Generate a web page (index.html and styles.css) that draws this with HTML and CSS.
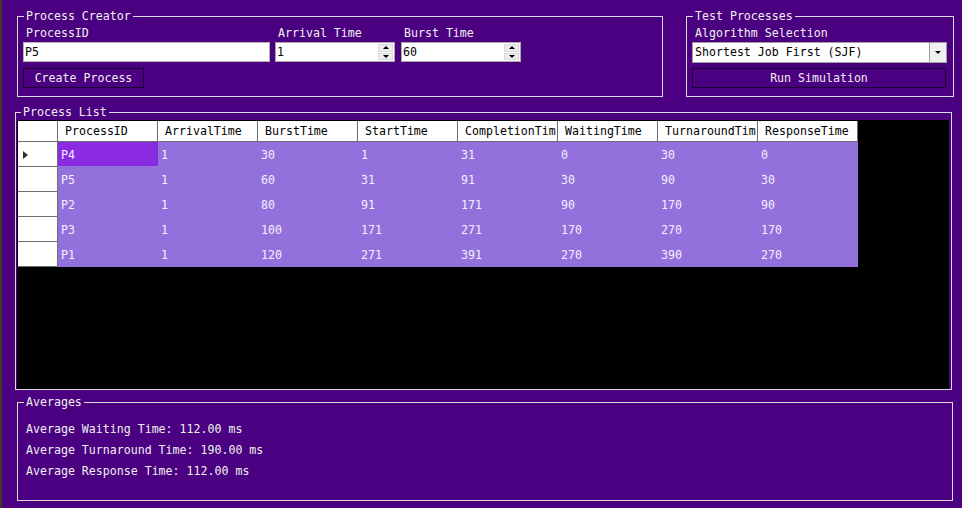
FILE: index.html
```html
<!DOCTYPE html>
<html lang="en">
<head>
    <meta charset="UTF-8">
    <meta name="viewport" content="width=device-width, initial-scale=1.0">
    <title>CPU Scheduler</title>
    <link rel="stylesheet" href="styles.css">
</head>
<body>

<div class="top-row">
    <fieldset class="group creator">
        <legend>Process Creator</legend>
        <div class="creator-fields">
            <div class="field field-id">
                <label for="processId">ProcessID</label>
                <input type="text" id="processId" class="textbox" value="P5">
            </div>
            <div class="field field-arrival">
                <label for="arrivalTime">Arrival Time</label>
                <div class="spin-box">
                    <input type="text" id="arrivalTime" value="1">
                    <div class="spinner">
                        <span class="spin-btn"><i class="tri-up"></i></span>
                        <span class="spin-btn"><i class="tri-down"></i></span>
                    </div>
                </div>
            </div>
            <div class="field field-burst">
                <label for="burstTime">Burst Time</label>
                <div class="spin-box">
                    <input type="text" id="burstTime" value="60">
                    <div class="spinner">
                        <span class="spin-btn"><i class="tri-up"></i></span>
                        <span class="spin-btn"><i class="tri-down"></i></span>
                    </div>
                </div>
            </div>
        </div>
        <button class="win-btn create-btn">Create Process</button>
    </fieldset>

    <fieldset class="group tester">
        <legend>Test Processes</legend>
        <div class="field">
            <label>Algorithm Selection</label>
            <div class="combo">
                <span class="combo-text">Shortest Job First (SJF)</span>
                <span class="combo-btn"><i class="tri-down"></i></span>
            </div>
        </div>
        <button class="win-btn run-btn">Run Simulation</button>
    </fieldset>
</div>

<fieldset class="group process-list">
    <legend>Process List</legend>
    <div class="grid-view">
        <table class="grid-table">
            <colgroup>
                <col class="col-head">
                <col><col><col><col><col><col><col><col>
            </colgroup>
            <thead>
                <tr>
                    <th class="corner"></th>
                    <th>ProcessID</th>
                    <th>ArrivalTime</th>
                    <th>BurstTime</th>
                    <th>StartTime</th>
                    <th>CompletionTim</th>
                    <th>WaitingTime</th>
                    <th>TurnaroundTim</th>
                    <th>ResponseTime</th>
                </tr>
            </thead>
            <tbody>
                <tr>
                    <td class="row-head"><span class="row-arrow"></span></td>
                    <td class="selected">P4</td><td>1</td><td>30</td><td>1</td><td>31</td><td>0</td><td>30</td><td>0</td>
                </tr>
                <tr>
                    <td class="row-head"></td>
                    <td>P5</td><td>1</td><td>60</td><td>31</td><td>91</td><td>30</td><td>90</td><td>30</td>
                </tr>
                <tr>
                    <td class="row-head"></td>
                    <td>P2</td><td>1</td><td>80</td><td>91</td><td>171</td><td>90</td><td>170</td><td>90</td>
                </tr>
                <tr>
                    <td class="row-head"></td>
                    <td>P3</td><td>1</td><td>100</td><td>171</td><td>271</td><td>170</td><td>270</td><td>170</td>
                </tr>
                <tr>
                    <td class="row-head"></td>
                    <td>P1</td><td>1</td><td>120</td><td>271</td><td>391</td><td>270</td><td>390</td><td>270</td>
                </tr>
            </tbody>
        </table>
    </div>
</fieldset>

<fieldset class="group averages">
    <legend>Averages</legend>
    <div class="avg-lines">
        <div>Average Waiting Time: 112.00 ms</div>
        <div>Average Turnaround Time: 190.00 ms</div>
        <div>Average Response Time: 112.00 ms</div>
    </div>
</fieldset>

</body>
</html>
```

FILE: styles.css
```css
* {
    box-sizing: border-box;
}

body {
    margin: 0;
    height: 508px;
    padding-top: 9px;
    background-color: #4b0082;
    border-left: 2px solid #3e3a22;
    font-family: 'DejaVu Sans Mono', monospace;
    font-size: 11.6px;
    line-height: 14px;
    color: #f0f0f0;
    overflow: hidden;
}

/* group boxes */
.group {
    margin: 0;
    min-width: 0;
    padding: 0 5px;
    border: 1px solid #dcdcdc;
}

.group legend {
    margin-left: 1px;
    padding: 0 2px;
    line-height: 14px;
}

.top-row {
    display: flex;
    margin-left: 15px;
}

.creator {
    width: 646px;
    padding-bottom: 8px;
}

.tester {
    width: 268px;
    margin-left: 23px;
    padding-bottom: 8px;
}

.creator-fields {
    display: flex;
}

.field {
    margin-top: 3px;
}

.field label {
    display: block;
    padding-left: 3px;
    margin-bottom: 2px;
}

.field-id {
    width: 252px;
}

.field-arrival {
    width: 126px;
}

.field-burst {
    width: 120px;
}

.textbox {
    display: block;
    width: 247px;
    height: 20px;
    margin: 0;
    padding: 0 1px;
    border: 1px solid #b4b4b4;
    background: #fff;
    color: #000;
    font: inherit;
    outline: none;
}

.spin-box {
    display: flex;
    width: 120px;
    height: 20px;
    border: 1px solid #a9a9a9;
    background: #fff;
}

.spin-box input {
    flex: 1;
    min-width: 0;
    margin: 0;
    padding: 0 1px;
    border: none;
    background: transparent;
    color: #000;
    font: inherit;
    outline: none;
}

.spinner {
    display: flex;
    flex-direction: column;
    width: 15px;
    margin: 1px 1px 1px 0;
    gap: 1px;
}

.spin-btn {
    flex: 1;
    display: flex;
    align-items: center;
    justify-content: center;
    background: #ececec;
    border: 1px solid #dadada;
}

.tri-up,
.tri-down {
    width: 0;
    height: 0;
    border-left: 3px solid transparent;
    border-right: 3px solid transparent;
}

.tri-up {
    border-bottom: 3px solid #000;
}

.tri-down {
    border-top: 3px solid #000;
}

.combo {
    display: flex;
    width: 255px;
    height: 21px;
    border: 1px solid #a0a0a0;
    background: #fff;
    color: #000;
}

.combo-text {
    flex: 1;
    padding-left: 2px;
    line-height: 19px;
}

.combo-btn {
    display: flex;
    align-items: center;
    justify-content: center;
    width: 17px;
    background: #f0f0f0;
    border-left: 1px solid #a0a0a0;
}

.win-btn {
    display: block;
    height: 20px;
    margin: 6px 0 0 0;
    padding: 0;
    background-color: #4b0082;
    border: 1px solid #1c0033;
    color: #f0f0f0;
    font: inherit;
    cursor: pointer;
}

.create-btn {
    width: 121px;
}

.run-btn {
    width: 254px;
    margin-top: 5px;
}

/* process list grid */
.process-list {
    width: 937px;
    margin: 8px 0 0 13px;
    padding: 0 2px 0 1px;
}

.process-list legend {
    margin-left: 4px;
}

.grid-view {
    height: 269px;
    margin-top: 1px;
    padding: 1px 0 0 1px;
    background: #000;
}

.grid-table {
    width: 840px;
    table-layout: fixed;
    border-collapse: separate;
    border-spacing: 0;
}

.grid-table col {
    width: 100px;
}

.grid-table .col-head {
    width: 40px;
}

.grid-table thead tr {
    height: 21px;
}

.grid-table tbody tr {
    height: 25px;
}

.grid-table th {
    padding: 0 0 0 7px;
    background: #fff;
    color: #000;
    font-weight: normal;
    text-align: left;
    white-space: nowrap;
    overflow: hidden;
    border-right: 1px solid #6e6e6e;
    border-bottom: 1px solid #6e6e6e;
}

.grid-table td {
    padding: 0 0 0 3px;
    background: #9370db;
    color: #f4f0ff;
    white-space: nowrap;
    overflow: hidden;
}

.grid-table td.selected {
    background: linear-gradient(#8a2be2, #8a2be2) top left / 100% 24px no-repeat, #9370db;
}

.grid-table .corner,
.grid-table td.row-head {
    padding: 0 0 0 5px;
    background: #fff;
    border-right: 1px solid #6e6e6e;
    border-bottom: 1px solid #6e6e6e;
}

.row-arrow {
    display: inline-block;
    width: 0;
    height: 0;
    vertical-align: middle;
    border-left: 5px solid #333;
    border-top: 4px solid transparent;
    border-bottom: 4px solid transparent;
}

/* averages */
.averages {
    width: 936px;
    margin: 5px 0 0 15px;
    padding-bottom: 18px;
}

.avg-lines {
    margin-top: 10px;
    padding-left: 3px;
    line-height: 21px;
}
```
